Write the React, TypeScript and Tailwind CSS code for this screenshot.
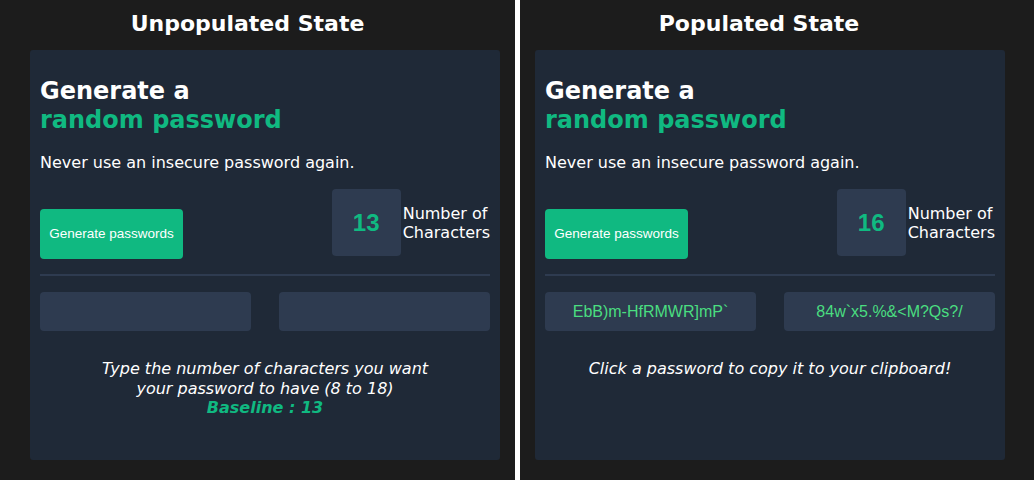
const passwordsLeft = ["", ""];
const passwordsRight = ["EbB)m-HfRMWR]mP`", "84w`x5.%&<M?Qs?/"];

function Card({
  count,
  passwords,
  populated,
}: {
  count: number;
  passwords: string[];
  populated: boolean;
}) {
  return (
    <div className="h-[410px] w-[470px] rounded-[3px] bg-[#1f2937] px-[10px] pt-[27px] font-['DejaVu_Sans',sans-serif] text-white">
      <h1 className="text-[24px] font-bold leading-[29px]">
        Generate a
        <br />
        <span className="text-[#10b981]">random password</span>
      </h1>
      <p className="mt-[18px] text-[16px] leading-[20px]">
        Never use an insecure password again.
      </p>

      <div className="mt-[16px] flex items-start justify-between">
        <button className="mt-[20px] h-[50px] w-[143px] rounded-[4px] bg-[#10b981] font-['Liberation_Sans',sans-serif] text-[13.5px] text-white">
          Generate passwords
        </button>
        <div className="flex items-center">
          <div className="flex h-[67px] w-[69px] items-center justify-center rounded-[4px] bg-[#2e3b50] font-['Liberation_Sans',sans-serif] text-[24px] font-bold text-[#10b981]">
            {count}
          </div>
          <div className="ml-[2px] text-[16px] leading-[19px]">
            Number of
            <br />
            Characters
          </div>
        </div>
      </div>

      <div className="mt-[15px] h-[2px] bg-[#2e3b50]" />

      <div className="mt-[16px] grid grid-cols-2 gap-[28px]">
        {passwords.map((pw, i) => (
          <div
            key={i}
            className="flex h-[39px] items-center justify-center rounded-[4px] bg-[#2e3b50] font-['Liberation_Sans',sans-serif] text-[16px] text-[#4ade80]"
          >
            {pw}
          </div>
        ))}
      </div>

      <div className="mt-[28px] text-center text-[16px] italic leading-[19.5px]">
        {populated ? (
          <p>Click a password to copy it to your clipboard!</p>
        ) : (
          <p>
            Type the number of characters you want
            <br />
            your password to have (8 to 18)
            <br />
            <span className="font-bold text-[#10b981]">Baseline : 13</span>
          </p>
        )}
      </div>
    </div>
  );
}

export default function App() {
  return (
    <div className="flex h-[480px] w-[1034px] bg-[#1c1c1c]">
      <section className="w-[515px] pl-[30px]">
        <h2 className="h-[50px] w-[435px] pt-[9px] text-center font-['DejaVu_Sans',sans-serif] text-[22px] font-bold leading-[30px] text-white">
          Unpopulated State
        </h2>
        <Card count={13} passwords={passwordsLeft} populated={false} />
      </section>
      <div className="w-[5px] bg-white" />
      <section className="flex-1 pl-[15px]">
        <h2 className="h-[50px] w-[448px] pt-[9px] text-center font-['DejaVu_Sans',sans-serif] text-[22px] font-bold leading-[30px] text-white">
          Populated State
        </h2>
        <Card count={16} passwords={passwordsRight} populated />
      </section>
    </div>
  );
}
